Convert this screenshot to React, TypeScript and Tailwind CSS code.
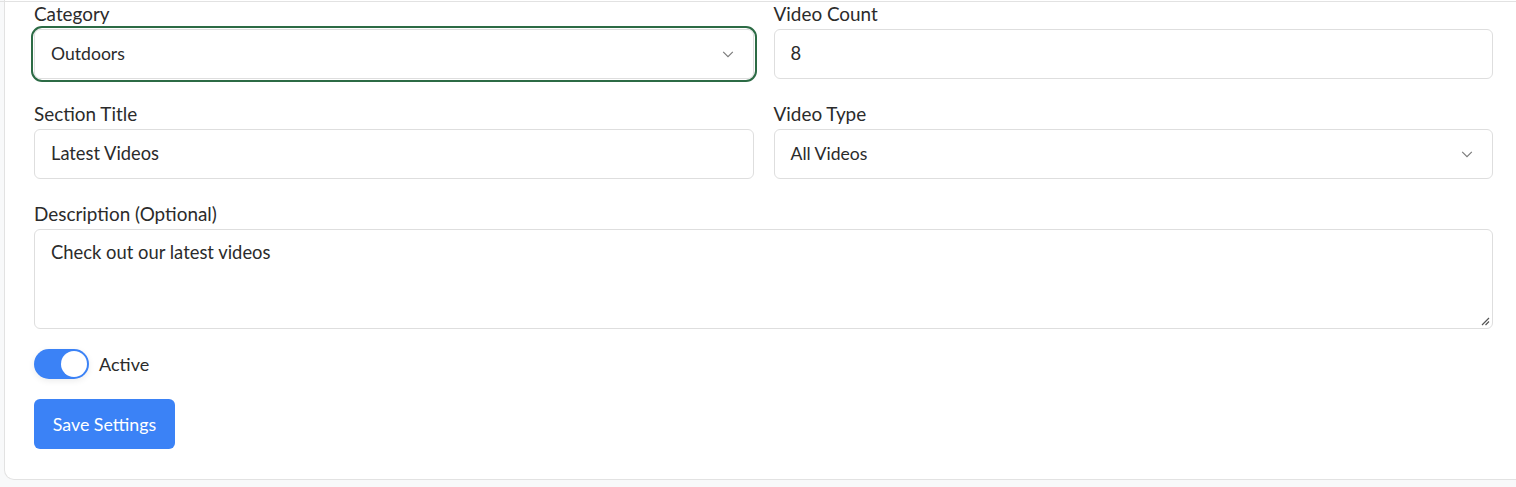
import React from "react";

function Chevron() {
  return (
    <svg width="14" height="14" viewBox="0 0 16 16" fill="none" className="shrink-0">
      <path d="M2.5 5.5 L8 11 L13.5 5.5" stroke="#7a7a7a" strokeWidth="1.3" />
    </svg>
  );
}

export default function App() {
  const font = { fontFamily: "Lato, 'Open Sans', sans-serif" };
  return (
    <div className="w-[1516px] h-[487px] overflow-hidden bg-[#f8f9fa]" style={font}>
      <div className="ml-[4px] w-[1530px] h-[480px] bg-white border border-[#e2e2e2] border-t-0 rounded-bl-[10px] relative">
        <div className="h-[2px] border-b border-[#e2e2e2] -ml-[5px] w-[1540px]" />
        <div className="pl-[29px] pr-[36px] pt-[1px] text-[#2b2b2b]">
          <div className="grid grid-cols-2 gap-x-[20px] w-[1459px]">
            <div>
              <div className="text-[18.9px] leading-[22px] h-[22px] mb-[4px]">Category</div>
              <div className="rounded-[8px] outline-2 outline-offset-[1px] outline-[#2c6b45] outline-solid">
                <div className="h-[50px] rounded-[6px] border border-[#dedede] flex items-center justify-between pl-[16px] pr-[18px] text-[17.6px]">
                  <span>Outdoors</span>
                  <Chevron />
                </div>
              </div>
            </div>
            <div>
              <div className="text-[18.9px] leading-[22px] h-[22px] mb-[4px]">Video Count</div>
              <div className="h-[50px] rounded-[6px] border border-[#dedede] flex items-center pl-[16px] text-[18.4px]">8</div>
            </div>
            <div className="mt-[24px]">
              <div className="text-[18.9px] leading-[22px] h-[22px] mb-[4px]">Section Title</div>
              <div className="h-[50px] rounded-[6px] border border-[#dedede] flex items-center pl-[16px] text-[18.3px]">Latest Videos</div>
            </div>
            <div className="mt-[24px]">
              <div className="text-[18.9px] leading-[22px] h-[22px] mb-[4px]">Video Type</div>
              <div className="h-[50px] rounded-[6px] border border-[#dedede] flex items-center justify-between pl-[16px] pr-[18px] text-[17.6px]">
                <span>All Videos</span>
                <Chevron />
              </div>
            </div>
          </div>
          <div className="mt-[24px] w-[1459px]">
            <div className="text-[18.9px] leading-[22px] h-[22px] mb-[4px]">Description (Optional)</div>
            <div className="h-[100px] rounded-[6px] border border-[#dedede] pl-[16px] pt-[10px] text-[18.4px] leading-[24px] relative">
              Check out our latest videos
              <svg className="absolute right-[2px] bottom-[2px]" width="9" height="9" viewBox="0 0 9 9">
                <path d="M1 8 L8 1 M4.5 8 L8 4.5" stroke="#555" strokeWidth="1.2" />
              </svg>
            </div>
          </div>
          <div className="mt-[20px] flex items-center gap-[10px]">
            <div className="w-[55px] h-[30px] rounded-full bg-[#3b82f6] flex items-center justify-end pr-[2px] shadow-[0_2px_6px_rgba(0,0,0,0.08)]">
              <div className="w-[26px] h-[26px] rounded-full bg-white" />
            </div>
            <span className="text-[18px]">Active</span>
          </div>
          <button className="mt-[20px] h-[50px] w-[141px] rounded-[6px] bg-[#3b82f6] text-white text-[17.8px]">Save Settings</button>
        </div>
      </div>
    </div>
  );
}
